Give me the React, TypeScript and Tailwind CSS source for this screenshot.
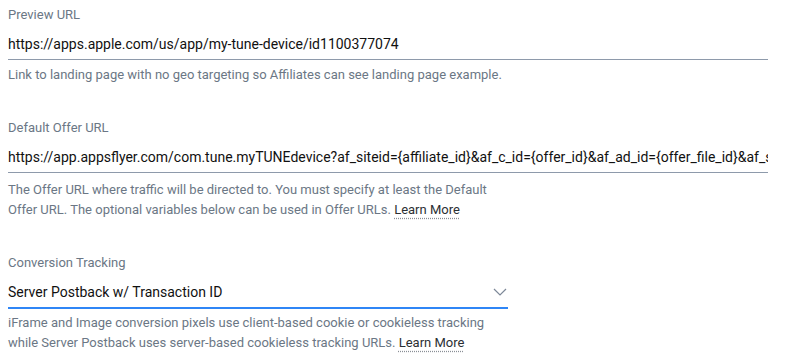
const labelClass = "block text-[13px] leading-4 text-[#6b7785]";
const helpClass = "text-[13px] leading-5 text-[#6b7785]";

function LearnMore() {
  return (
    <span className="text-[#2b2f33] underline decoration-[#8a8f96] decoration-dotted underline-offset-[4px]">
      Learn More
    </span>
  );
}

export default function App() {
  return (
    <div className="min-h-screen bg-white px-2 pt-[7px] font-['Roboto',sans-serif]">
      <div>
        <label className={labelClass}>Preview URL</label>
        <div className="mt-[7px] flex h-[30px] w-[760px] items-center border-b border-[#8e9aab] text-[14px] text-[#111]">
          https://apps.apple.com/us/app/my-tune-device/id1100377074
        </div>
        <p className={`mt-[5px] ${helpClass}`}>
          Link to landing page with no geo targeting so Affiliates can see landing page example.
        </p>
      </div>

      <div className="mt-[35px]">
        <label className={labelClass}>Default Offer URL</label>
        <div className="mt-[7px] flex h-[30px] w-[760px] items-center overflow-hidden whitespace-nowrap border-b border-[#8e9aab] text-[14px] text-[#111]">
          https://app.appsflyer.com/com.tune.myTUNEdevice?af_siteid={"{affiliate_id}"}&amp;af_c_id={"{offer_id}"}&amp;af_ad_id={"{offer_file_id}"}&amp;af_sub1={"{aff_sub}"}
        </div>
        <p className={`mt-[7px] max-w-[500px] ${helpClass}`}>
          The Offer URL where traffic will be directed to. You must specify at least the Default Offer URL. The
          optional variables below can be used in Offer URLs. <LearnMore />
        </p>
      </div>

      <div className="mt-[35px]">
        <label className={labelClass}>Conversion Tracking</label>
        <div className="mt-[6px] flex h-[32px] w-[500px] items-center justify-between border-b-2 border-[#2f86f6] text-[14px] text-[#111]">
          <span>Server Postback w/ Transaction ID</span>
          <svg width="14" height="8" viewBox="0 0 14 8" className="mr-[1px] text-[#7d8898]">
            <polyline points="1,1 7,7 13,1" fill="none" stroke="currentColor" strokeWidth="1.2" />
          </svg>
        </div>
        <p className={`mt-[4px] max-w-[500px] ${helpClass}`}>
          iFrame and Image conversion pixels use client-based cookie or cookieless tracking while Server Postback
          uses server-based cookieless tracking URLs. <LearnMore />
        </p>
      </div>
    </div>
  );
}
